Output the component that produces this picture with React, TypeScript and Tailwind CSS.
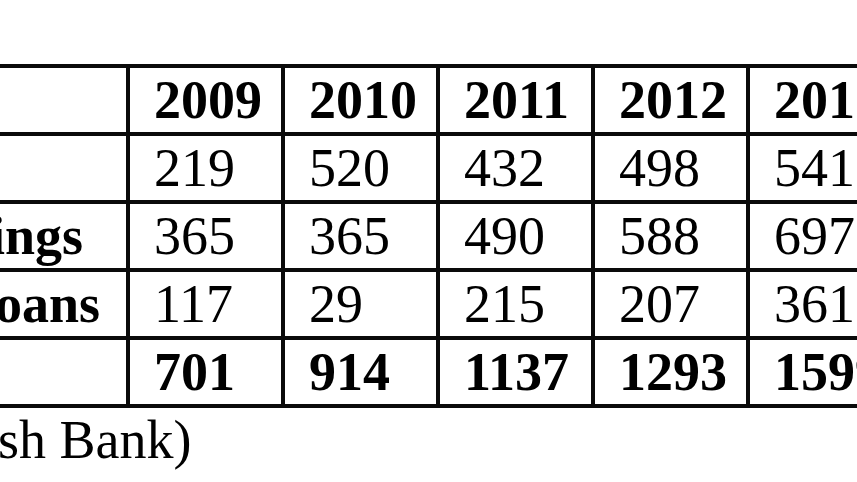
import React from "react"

const years = ["2009", "2010", "2011", "2012", "2013"]

const rows: { label: string; shift: string; values: string[]; bold?: boolean }[] = [
    { label: "", shift: "ml-0", values: ["219", "520", "432", "498", "541"] },
    { label: "ings", shift: "ml-[-10px]", values: ["365", "365", "490", "588", "697"] },
    { label: "oans", shift: "ml-[-5px]", values: ["117", "29", "215", "207", "361"] },
    { label: "", shift: "ml-0", values: ["701", "914", "1137", "1293", "1599"], bold: true },
]

const Cell = ({ children, bold }: { children: React.ReactNode; bold?: boolean }) => (
    <div className={`bg-white flex items-center pl-[24px] whitespace-nowrap overflow-hidden ${bold ? "font-bold" : "font-normal"}`}>
        {children}
    </div>
)

const App = () => {
    return (
        <div className="w-[857px] h-[482px] overflow-hidden bg-white text-black pt-[64px] font-['Liberation_Serif','Times_New_Roman',serif] text-[54px] leading-none">
            <div className="w-[920px] grid grid-cols-[126px_repeat(5,151px)] grid-rows-[repeat(5,64px)] gap-[4px] bg-[#0a0a0a] py-[4px]">
                <div className="bg-white"></div>
                {years.map((y) => (
                    <Cell key={y} bold>{y}</Cell>
                ))}

                {rows.map((row, i) => (
                    <React.Fragment key={i}>
                        <div className="bg-white flex items-center overflow-hidden whitespace-nowrap font-bold">
                            <span className={row.shift}>{row.label}</span>
                        </div>
                        {row.values.map((v, j) => (
                            <Cell key={j} bold={row.bold}>{v}</Cell>
                        ))}
                    </React.Fragment>
                ))}
            </div>

            <p className="mt-[5px] ml-[-2px] text-[54px] leading-none whitespace-nowrap">sh Bank)</p>
        </div>
    )
}

export default App
